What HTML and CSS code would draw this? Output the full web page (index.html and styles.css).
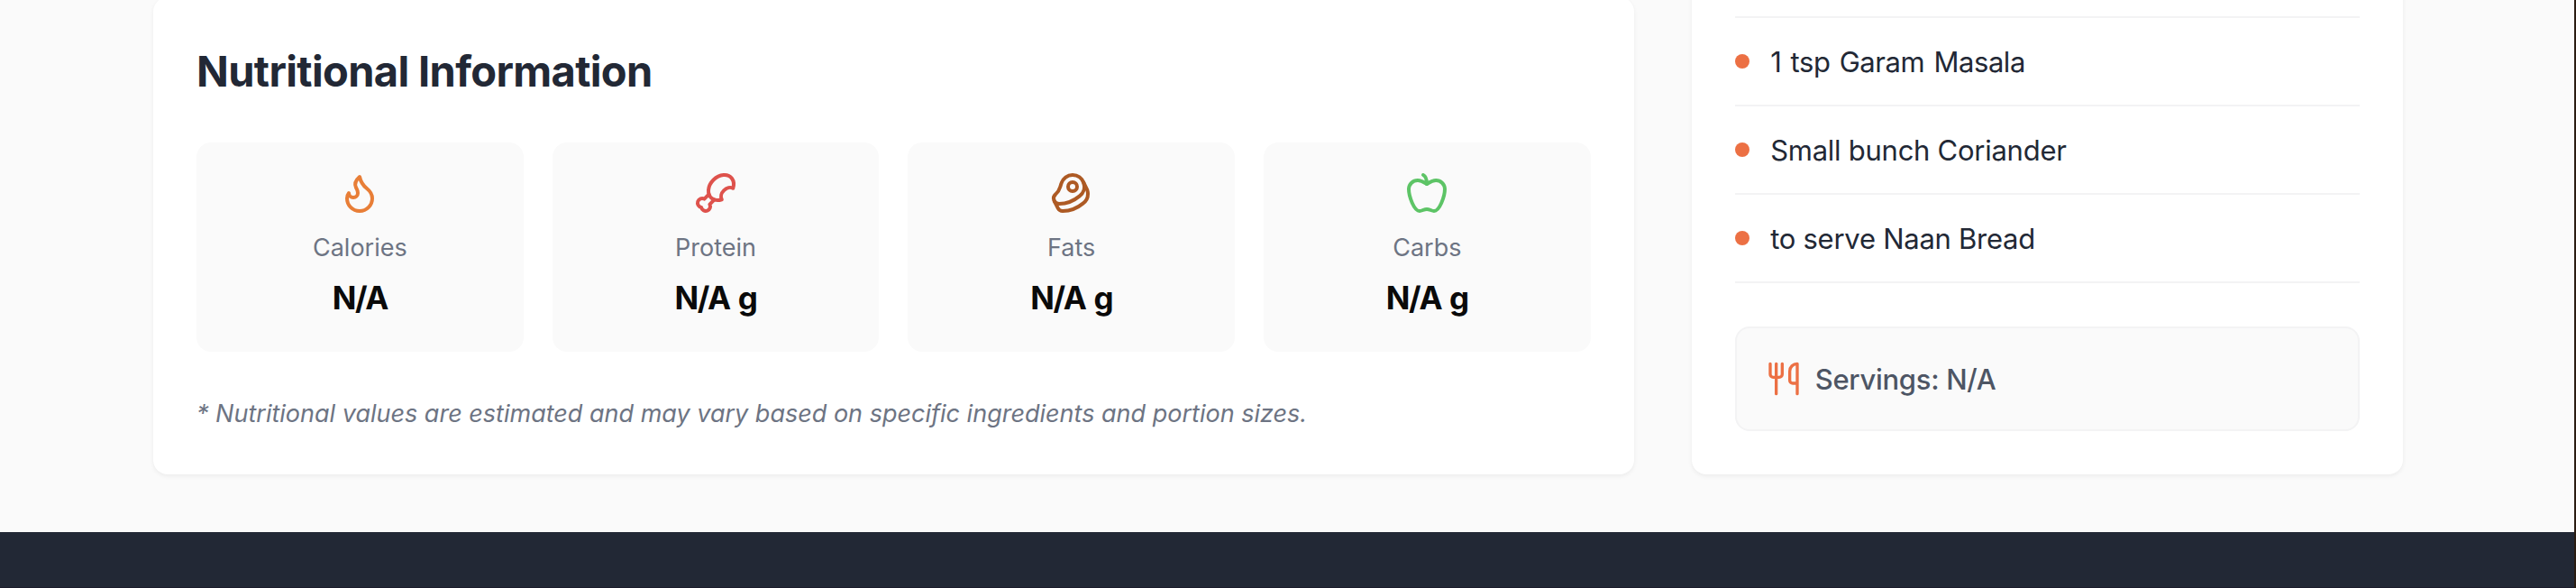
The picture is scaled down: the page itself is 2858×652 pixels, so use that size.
FILE: index.html
```html
<!DOCTYPE html>
<html lang="en">
<head>
<meta charset="utf-8">
<title>Recipe</title>
<link rel="stylesheet" href="styles.css">
</head>
<body>
<div class="page">
<main class="content">
  <section class="card nutrition">
    <h2 class="title">Nutritional Information</h2>
    <div class="facts">
      <div class="fact">
        <svg class="icon flame" viewBox="0 0 24 24"><path d="M8.5 14.5A2.5 2.5 0 0 0 11 12c0-1.38-.5-2-1-3-1.072-2.143-.224-4.054 2-6 .5 2.5 2 4.9 4 6.5 2 1.6 3 3.5 3 5.5a7 7 0 1 1-14 0c0-1.153.433-2.294 1-3a2.5 2.5 0 0 0 2.5 2.5z"/></svg>
        <p class="label">Calories</p>
        <p class="value">N/A</p>
      </div>
      <div class="fact">
        <svg class="icon drumstick" viewBox="0 0 24 24"><path d="M15.4 15.63a7.875 6 135 1 1 6.23-6.23 4.5 3.43 135 0 0-6.23 6.23"/><path d="m8.29 12.71-2.6 2.6a2.5 2.5 0 1 0-1.65 4.65A2.5 2.5 0 1 0 8.7 18.3l2.59-2.59"/></svg>
        <p class="label">Protein</p>
        <p class="value">N/A g</p>
      </div>
      <div class="fact">
        <svg class="icon beef" viewBox="0 0 24 24"><circle cx="12.5" cy="8.5" r="2.5"/><path d="M12.5 2a6.5 6.5 0 0 0-6.22 4.6c-1.1 3.13-.78 3.9-3.18 6.08A3 3 0 0 0 5 18c4 0 8.4-1.8 11.4-4.3A6.5 6.5 0 0 0 12.5 2Z"/><path d="m18.5 6 2.19 4.5a6.48 6.48 0 0 1 .31 2 6.49 6.49 0 0 1-2.6 5.2C15.4 20.2 11 22 7 22a3 3 0 0 1-2.68-1.66L2.4 16.5"/></svg>
        <p class="label">Fats</p>
        <p class="value">N/A g</p>
      </div>
      <div class="fact">
        <svg class="icon apple" viewBox="0 0 24 24"><path d="M12 20.94c1.5 0 2.75 1.06 4 1.06 3 0 6-8 6-12.22A4.91 4.91 0 0 0 17 5c-2.22 0-4 1.44-5 2-1-.56-2.78-2-5-2a4.9 4.9 0 0 0-5 4.78C2 14 5 22 8 22c1.25 0 2.5-1.06 4-1.06Z"/><path d="M10 2c1 .5 2 2 2 5"/></svg>
        <p class="label">Carbs</p>
        <p class="value">N/A g</p>
      </div>
    </div>
    <p class="note">* Nutritional values are estimated and may vary based on specific ingredients and portion sizes.</p>
  </section>
  <aside class="card ingredients">
    <ul class="list">
      <li class="item"><span class="dot"></span><span class="name spaced">1 tsp Garam Masala</span></li>
      <li class="item"><span class="dot"></span><span class="name">Small bunch Coriander</span></li>
      <li class="item"><span class="dot"></span><span class="name">to serve Naan Bread</span></li>
    </ul>
    <div class="servings">
      <svg class="utensils" viewBox="0 0 24 24"><path d="M3 2v7c0 1.1.9 2 2 2h4a2 2 0 0 0 2-2V2"/><path d="M7 2v20"/><path d="M21 15V2a5 5 0 0 0-5 5v6c0 1.1.9 2 2 2h3Zm0 0v7"/></svg>
      <span class="count">Servings: N/A</span>
    </div>
  </aside>
</main>
<footer class="footer"></footer>
</div>
</body>
</html>
```
FILE: styles.css
```css
* { box-sizing: border-box; margin: 0; padding: 0; }
body {
  height: 652px;
  overflow: hidden;
  background: #2a1c12;
  font-family: Inter, "Liberation Sans", sans-serif;
  color: #0a0a0a;
}
.page {
  width: 2856px;
  height: 652px;
  display: flex;
  flex-direction: column;
  background: #fafafa;
}
.content {
  height: 590px;
  padding: 0 190px 64px 170px;
  display: grid;
  grid-template-columns: repeat(3, 1fr);
  grid-template-rows: 526px;
  column-gap: 64px;
}
.card {
  background: #fff;
  border-radius: 16px;
  padding: 0 48px;
  box-shadow: 0 2px 5px rgba(0, 0, 0, .06);
}
.nutrition { grid-column: span 2; margin-top: -3px; }
.ingredients { margin-top: -20px; }
.title {
  padding-top: 50px;
  height: 161px;
  font-size: 47px;
  line-height: 64px;
  font-weight: 700;
  color: #222835;
  letter-spacing: -.64px;
  white-space: nowrap;
}
.facts { display: grid; grid-template-columns: repeat(4, 1fr); gap: 32px; }
.fact {
  height: 232px;
  padding-top: 32px;
  border-radius: 16px;
  background: #fafafa;
  display: flex;
  flex-direction: column;
  align-items: center;
}
.icon {
  width: 48px;
  height: 48px;
  fill: none;
  stroke: currentColor;
  stroke-width: 2;
  stroke-linecap: round;
  stroke-linejoin: round;
}
.flame { color: #e87e37; }
.drumstick { color: #de524c; }
.beef { color: #ad5a24; }
.apple { color: #5dc466; }
.label { margin-top: 16px; font-size: 27px; line-height: 41px; color: #6d7483; }
.value {
  margin-top: 7px;
  font-size: 35px;
  line-height: 56px;
  font-weight: 650;
  letter-spacing: -1.4px;
  word-spacing: 2px;
}
.note {
  margin-top: 48px;
  font-size: 27px;
  line-height: 41px;
  font-style: italic;
  color: #6d7483;
  white-space: nowrap;
}
.list { list-style: none; padding-top: 38px; }
.item {
  height: 98px;
  display: flex;
  align-items: center;
  gap: 23.5px;
  border-bottom: 2px solid #f3f3f4;
  font-size: 31px;
  line-height: 48px;
  letter-spacing: -.26px;
  color: #222835;
}
.item:first-child { height: 100px; border-top: 2px solid #f3f3f4; }
.name { padding-top: 2px; }
.spaced { letter-spacing: -.45px; word-spacing: 2px; }
.dot { width: 16px; height: 16px; border-radius: 50%; background: #ec7044; }
.servings {
  margin-top: 48px;
  height: 116px;
  padding-left: 32px;
  display: flex;
  align-items: center;
  gap: 15px;
  border: 2px solid #f3f3f4;
  border-radius: 16px;
  background: #fafafa;
  font-size: 31px;
  font-weight: 500;
  letter-spacing: -.3px;
  color: #4d5564;
}
.count { padding-top: 1px; }
.utensils {
  width: 40px;
  height: 40px;
  fill: none;
  stroke: #ec7044;
  stroke-width: 2;
  stroke-linecap: round;
  stroke-linejoin: round;
}
.footer { height: 62px; background: #222835; border-bottom: 1px solid #1b1c2b; }
```
